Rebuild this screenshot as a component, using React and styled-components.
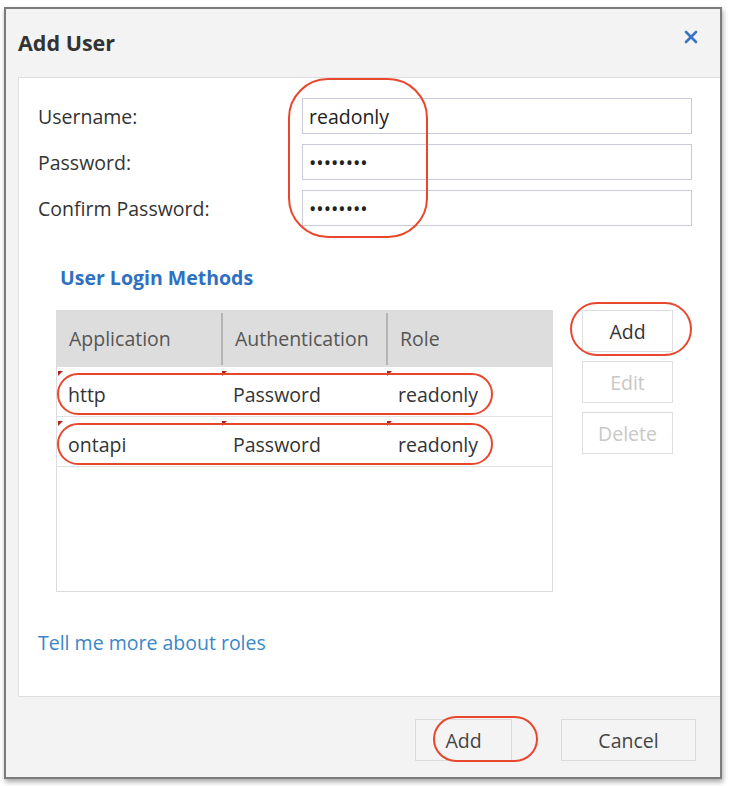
import React from 'react';
import styled, { createGlobalStyle } from "styled-components";

const GlobalStyle = createGlobalStyle`
  body {
    margin: 0;
    background: #ffffff;
    font-family: "Open Sans", "Liberation Sans", sans-serif;
  }
`;

const Page = styled.div`
  width: 732px;
  height: 786px;
  padding: 7px 0 0 4px;
  box-sizing: border-box;
`;

const Dialog = styled.div`
  width: 718px;
  height: 772px;
  box-sizing: border-box;
  border: 2px solid #7b7b7b;
  background: #f3f3f3;
  box-shadow: 1px 3px 5px rgba(0, 0, 0, 0.35);
  display: flex;
  flex-direction: column;
`;

const Header = styled.div`
  height: 68px;
  flex-shrink: 0;
  display: flex;
  align-items: center;
  justify-content: space-between;
  padding: 0 22px 0 12px;
`;

const Title = styled.h1`
  margin: 0;
  margin-top: -2px;
  font-size: 21.5px;
  font-weight: 700;
  color: #333;
`;

const CloseButton = styled.button`
  border: none;
  background: none;
  padding: 0;
  margin-top: -12px;
  display: flex;
  cursor: pointer;
`;

const Body = styled.div`
  flex: 1;
  margin-left: 12px;
  background: #fff;
  border: 1px solid #dedede;
  border-right: none;
  padding: 20px 28px 0 19px;
  display: flex;
  flex-direction: column;
`;

const FormGrid = styled.div`
  display: grid;
  grid-template-columns: 264px 1fr;
`;

const Labels = styled.div`
  display: flex;
  flex-direction: column;
  gap: 10px;
`;

const Label = styled.label`
  height: 36px;
  display: flex;
  align-items: center;
  font-size: 19.5px;
  color: #333;
`;

const Inputs = styled.div`
  position: relative;
  display: flex;
  flex-direction: column;
  gap: 10px;
`;

const Input = styled.input`
  height: 36px;
  box-sizing: border-box;
  border: 1px solid #c9cbd9;
  padding: 0 6px;
  font-family: inherit;
  font-size: 19.5px;
  color: #222;
  outline: none;
`;

const Ring = styled.div`
  position: absolute;
  pointer-events: none;
  border: 2.5px solid #e8472e;
  box-sizing: border-box;
  left: ${p => p.$left}px;
  top: ${p => p.$top}px;
  width: ${p => p.$w}px;
  height: ${p => p.$h}px;
  border-radius: ${p => p.$r}px;
`;

const SectionTitle = styled.h2`
  margin: 38px 0 0 22px;
  font-size: 19.5px;
  font-weight: 700;
  color: #2f70c2;
`;

const MethodsArea = styled.div`
  display: flex;
  margin: 19px 0 0 18px;
  gap: 29px;
`;

const Table = styled.div`
  width: 497px;
  height: 282px;
  box-sizing: border-box;
  border: 1px solid #dcdcdc;
  display: flex;
  flex-direction: column;
`;

const HeadRow = styled.div`
  display: grid;
  grid-template-columns: 165px 165px 1fr;
  height: 56px;
  background: #dddddd;
`;

const HeadCell = styled.div`
  display: flex;
  align-items: center;
  padding-left: 12px;
  font-size: 19.5px;
  color: #555;
  border-left: ${p => (p.$first ? "none" : "2px solid #b5b5b5")};
  margin: 2px 0;
  padding-bottom: 1px;
  margin-left: ${p => (p.$first ? "0" : "-1px")};
`;

const Row = styled.div`
  position: relative;
  display: grid;
  grid-template-columns: 165px 165px 1fr;
  height: 49px;
  border-bottom: 1px solid #e2e2e2;
`;

const Cell = styled.div`
  position: relative;
  display: flex;
  align-items: center;
  padding-left: 11px;
  padding-top: 6px;
  font-size: 19.5px;
  color: #333;

  &::before {
    content: "";
    position: absolute;
    left: ${p => (p.$first ? "1px" : "0")};
    top: 4px;
    border-top: 5px solid #a8241c;
    border-right: 5px solid transparent;
  }
`;

const SideButtons = styled.div`
  display: flex;
  flex-direction: column;
  gap: 9px;
`;

const ButtonWrap = styled.div`
  position: relative;
`;

const SideButton = styled.button`
  width: 91px;
  height: 42px;
  box-sizing: border-box;
  border: 1px solid #dedede;
  background: #fff;
  font-family: inherit;
  font-size: 19.5px;
  color: ${p => (p.disabled ? "#c8c8c8" : "#333")};
`;

const HelpLink = styled.a`
  margin: 37px 0 0 0;
  font-size: 19.5px;
  color: #3a87c9;
  text-decoration: none;
`;

const Footer = styled.div`
  height: 80px;
  flex-shrink: 0;
  display: flex;
  justify-content: flex-end;
  align-items: flex-start;
  gap: 49px;
  padding: 22px 24px 0 0;
  box-sizing: border-box;
`;

const FooterButton = styled.button`
  width: ${p => p.$w}px;
  height: 42px;
  box-sizing: border-box;
  border: 1px solid #dadada;
  background: #f4f4f4;
  font-family: inherit;
  font-size: 19.5px;
  color: #444;
`;

const methods = [
  { app: "http", auth: "Password", role: "readonly" },
  { app: "ontapi", auth: "Password", role: "readonly" },
];

const App = () => {
  return (
    <Page>
      <GlobalStyle />
      <Dialog>
        <Header>
          <Title>Add User</Title>
          <CloseButton aria-label="Close">
            <svg width="14" height="14" viewBox="0 0 14 14">
              <path d="M2 2 L12 12 M12 2 L2 12" stroke="#3b74c6" strokeWidth="2.6" strokeLinecap="round" />
            </svg>
          </CloseButton>
        </Header>

        <Body>
          <FormGrid>
            <Labels>
              <Label>Username:</Label>
              <Label>Password:</Label>
              <Label>Confirm Password:</Label>
            </Labels>
            <Inputs>
              <Input defaultValue="readonly" />
              <Input type="password" defaultValue="readonly" />
              <Input type="password" defaultValue="readonly" />
              <Ring $left={-14} $top={-20} $w={140} $h={160} $r={40} />
            </Inputs>
          </FormGrid>

          <SectionTitle>User Login Methods</SectionTitle>

          <MethodsArea>
            <Table>
              <HeadRow>
                <HeadCell $first>Application</HeadCell>
                <HeadCell>Authentication</HeadCell>
                <HeadCell>Role</HeadCell>
              </HeadRow>
              {methods.map(m => (
                <Row key={m.app}>
                  <Cell $first>{m.app}</Cell>
                  <Cell>{m.auth}</Cell>
                  <Cell>{m.role}</Cell>
                  <Ring $left={0} $top={6} $w={436} $h={42} $r={21} />
                </Row>
              ))}
            </Table>

            <SideButtons>
              <ButtonWrap>
                <SideButton>Add</SideButton>
                <Ring $left={-12} $top={-8} $w={122} $h={54} $r={27} />
              </ButtonWrap>
              <SideButton disabled>Edit</SideButton>
              <SideButton disabled>Delete</SideButton>
            </SideButtons>
          </MethodsArea>

          <HelpLink href="#">Tell me more about roles</HelpLink>
        </Body>

        <Footer>
          <ButtonWrap>
            <FooterButton $w={97}>Add</FooterButton>
            <Ring $left={18} $top={-3} $w={105} $h={46} $r={23} />
          </ButtonWrap>
          <FooterButton $w={135}>Cancel</FooterButton>
        </Footer>
      </Dialog>
    </Page>
  );
};

export default App;
